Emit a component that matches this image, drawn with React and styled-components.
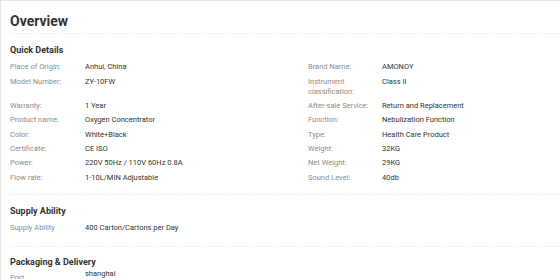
import React from "react";
import styled, { createGlobalStyle } from "styled-components";

const Global = createGlobalStyle`
  html, body { margin: 0; padding: 0; background: #fff; }
  body { font-family: Roboto, "Open Sans", Arial, sans-serif; color: #333; }
`;

const Card = styled.div`
  border-top: 1px solid #e6e6e6;
  border-left: 1px solid #e6e6e6;
  padding: 10px 0 0 9px;
  height: 279px;
  overflow: hidden;
  box-sizing: border-box;
`;

const Title = styled.h2`
  margin: 0;
  font-size: 14px;
  line-height: 20px;
  font-weight: 700;
  color: #333;
  padding-bottom: 2px;
`;

const Divider = styled.div`
  height: 1px;
  background-image: repeating-linear-gradient(
    to right,
    #dcdcdc 0 1px,
    transparent 1px 3px
  );
`;

const Section = styled.section`
  padding-bottom: ${(p) => p.$pb ?? 12}px;
`;

const Heading = styled.h3`
  margin: ${(p) => p.$mt ?? 10}px 0 ${(p) => p.$mb ?? 4}px;
  font-size: 9px;
  line-height: 12px;
  font-weight: 700;
  color: #333;
`;

const Row = styled.div`
  display: grid;
  grid-template-columns: 75px 223px 74px 1fr;
  align-items: start;
  font-size: 7.5px;
  line-height: 10px;
`;

const Label = styled.div`
  color: #8c8c8c;
  padding: ${(p) => p.$pt ?? 2.2}px 6px 2.2px 0;
`;

const Value = styled.div`
  color: #333;
  padding: ${(p) => p.$pt ?? 2.2}px 0 2.2px;
`;

const quick = [
  ["Place of Origin:", "Anhui, China", "Brand Name:", "AMONOY"],
  ["Model Number:", "ZY-10FW", "Instrument classification:", "Class II"],
  ["Warranty:", "1 Year", "After-sale Service:", "Return and Replacement"],
  ["Product name:", "Oxygen Concentrator", "Function:", "Nebulization Function"],
  ["Color:", "White+Black", "Type:", "Health Care Product"],
  ["Certificate:", "CE ISO", "Weight:", "32KG"],
  ["Power:", "220V 50Hz / 110V 60Hz 0.8A", "Net Weight:", "29KG"],
  ["Flow rate:", "1-10L/MIN Adjustable", "Sound Level:", "40db"],
];

export default function App() {
  return (
    <>
      <Global />
      <Card>
        <Title>Overview</Title>
        <Divider />
        <Section $pb={9}>
          <Heading $mt={10}>Quick Details</Heading>
          {quick.map((r, i) => (
            <Row key={i}>
              <Label>{r[0]}</Label>
              <Value>{r[1]}</Value>
              <Label>{r[2]}</Label>
              <Value>{r[3]}</Value>
            </Row>
          ))}
        </Section>
        <Divider />
        <Section $pb={11}>
          <Heading $mt={10}>Supply Ability</Heading>
          <Row>
            <Label>Supply Ability</Label>
            <Value>400 Carton/Cartons per Day</Value>
          </Row>
        </Section>
        <Divider />
        <Section>
          <Heading $mt={9} $mb={0}>Packaging &amp; Delivery</Heading>
          <Row>
            <Label $pt={4.2}>Port</Label>
            <Value $pt={1}>shanghai</Value>
          </Row>
        </Section>
      </Card>
    </>
  );
}
